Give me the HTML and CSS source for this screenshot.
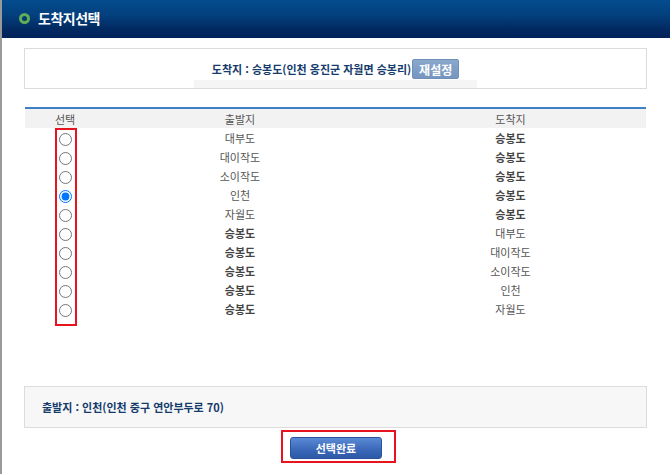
FILE: index.html
```html
<!DOCTYPE html>
<html lang="ko">
<head>
<meta charset="utf-8">
<title>도착지선택</title>
<link rel="stylesheet" href="styles.css">
</head>
<body>
<div class="page">
  <header class="hd">
    <span class="hd-icon"></span>
    <h1 class="hd-title">도착지선택</h1>
  </header>
  <main class="content">
    <section class="dest-box">
      <div class="dest-row">
        <span class="dest-text">도착지 : 승봉도(인천 옹진군 자월면 승봉리)</span>
        <button class="btn-reset" type="button">재설정</button>
      </div>
      <div class="dest-strip"></div>
    </section>

    <div class="table-wrap">
      <table class="route">
        <thead>
          <tr><th class="c-sel">선택</th><th class="c-from">출발지</th><th class="c-to">도착지</th></tr>
        </thead>
        <tbody>
          <tr><td class="c-sel"><input type="radio" name="r"></td><td>대부도</td><td class="b">승봉도</td></tr>
          <tr><td class="c-sel"><input type="radio" name="r"></td><td>대이작도</td><td class="b">승봉도</td></tr>
          <tr><td class="c-sel"><input type="radio" name="r"></td><td>소이작도</td><td class="b">승봉도</td></tr>
          <tr><td class="c-sel"><input type="radio" name="r" checked></td><td>인천</td><td class="b">승봉도</td></tr>
          <tr><td class="c-sel"><input type="radio" name="r"></td><td>자월도</td><td class="b">승봉도</td></tr>
          <tr><td class="c-sel"><input type="radio" name="r"></td><td class="b">승봉도</td><td>대부도</td></tr>
          <tr><td class="c-sel"><input type="radio" name="r"></td><td class="b">승봉도</td><td>대이작도</td></tr>
          <tr><td class="c-sel"><input type="radio" name="r"></td><td class="b">승봉도</td><td>소이작도</td></tr>
          <tr><td class="c-sel"><input type="radio" name="r"></td><td class="b">승봉도</td><td>인천</td></tr>
          <tr><td class="c-sel"><input type="radio" name="r"></td><td class="b">승봉도</td><td>자월도</td></tr>
        </tbody>
      </table>
      <div class="mark-radios"></div>
    </div>

    <section class="from-box">
      <span class="from-text">출발지 : 인천(인천 중구 연안부두로 70)</span>
    </section>

    <div class="actions">
      <div class="mark-btn">
        <button class="btn-done" type="button">선택완료</button>
      </div>
    </div>
  </main>
</div>
</body>
</html>
```

FILE: styles.css
```css
html, body {
  margin: 0;
  padding: 0;
  background: #fff;
}
body {
  font-family: "Noto Sans CJK KR", "Noto Sans", sans-serif;
  font-size: 11px;
  color: #555;
}
.page {
  width: 670px;
  height: 474px;
  box-sizing: border-box;
  border-left: 2px solid #9a9a9a;
  overflow: hidden;
}
.hd {
  height: 38px;
  display: flex;
  align-items: center;
  padding-left: 17px;
  background: linear-gradient(#044c8e 0%, #03407d 40%, #022a62 75%, #022359 100%);
}
.hd-icon {
  width: 11px;
  height: 11px;
  box-sizing: border-box;
  border: 3px solid #5fae55;
  border-radius: 50%;
  margin-right: 8px;
  margin-top: -2px;
}
.hd-title {
  margin: 0;
  color: #fff;
  font-size: 14px;
  font-weight: bold;
  letter-spacing: -0.5px;
  margin-top: -2px;
}
.content {
  padding: 10px 23px 0 22px;
}
.dest-box {
  border: 1px solid #dcdcdc;
  height: 29px;
  display: flex;
  flex-direction: column;
  align-items: center;
  padding-top: 10px;
}
.dest-row {
  display: flex;
  align-items: center;
  height: 20px;
}
.dest-text, .from-text {
  color: #153b6c;
  font-weight: bold;
  font-size: 11px;
  letter-spacing: 0;
}
.btn-reset {
  width: 47px;
  height: 20px;
  margin-left: 1px;
  border: 1px solid #6f90bb;
  border-radius: 2px;
  background: linear-gradient(#8aa7cc, #7696c0);
  color: #fff;
  font-family: inherit;
  font-size: 12px;
  font-weight: bold;
  padding: 0;
}
.dest-strip {
  width: 283px;
  height: 8px;
  margin-top: 1px;
  background: #f5f5f5;
}
.table-wrap {
  position: relative;
  margin: 18px 1px 0 1px;
  height: 279px;
}
.route {
  width: 100%;
  border-collapse: collapse;
  border-top: 2px solid #3f7fc4;
  table-layout: fixed;
}
.route th {
  background: #f2f2f2;
  height: 19px;
  padding: 0;
  font-weight: normal;
  color: #555;
  font-size: 11px;
}
.route td {
  height: 19px;
  padding: 0;
  text-align: center;
  color: #555;
  font-size: 11px;
}
.route td.b {
  font-weight: bold;
  color: #444;
}
.route .c-sel { width: 80px; }
.route .c-from { width: 270px; }
.route input[type="radio"] {
  margin: 0;
  width: 13px;
  height: 13px;
  vertical-align: middle;
}
.mark-radios {
  position: absolute;
  left: 30px;
  top: 21px;
  width: 18px;
  height: 194px;
  border: 2px solid #e5141f;
}
.from-box {
  border: 1px solid #dcdcdc;
  background: #f7f7f7;
  height: 40px;
  display: flex;
  align-items: center;
  padding-left: 17px;
}
.actions {
  display: flex;
  justify-content: center;
  margin-top: 2px;
  padding-left: 6px;
}
.mark-btn {
  border: 2px solid #e5141f;
  padding: 5px 12px 2px 7px;
}
.btn-done {
  display: block;
  width: 92px;
  height: 22px;
  border: 1px solid #2b539b;
  border-radius: 3px;
  background: linear-gradient(#5a8ad6, #3a67b8 60%, #2f5aa8);
  color: #fff;
  font-family: inherit;
  font-size: 11px;
  font-weight: bold;
  padding: 0;
}
```
